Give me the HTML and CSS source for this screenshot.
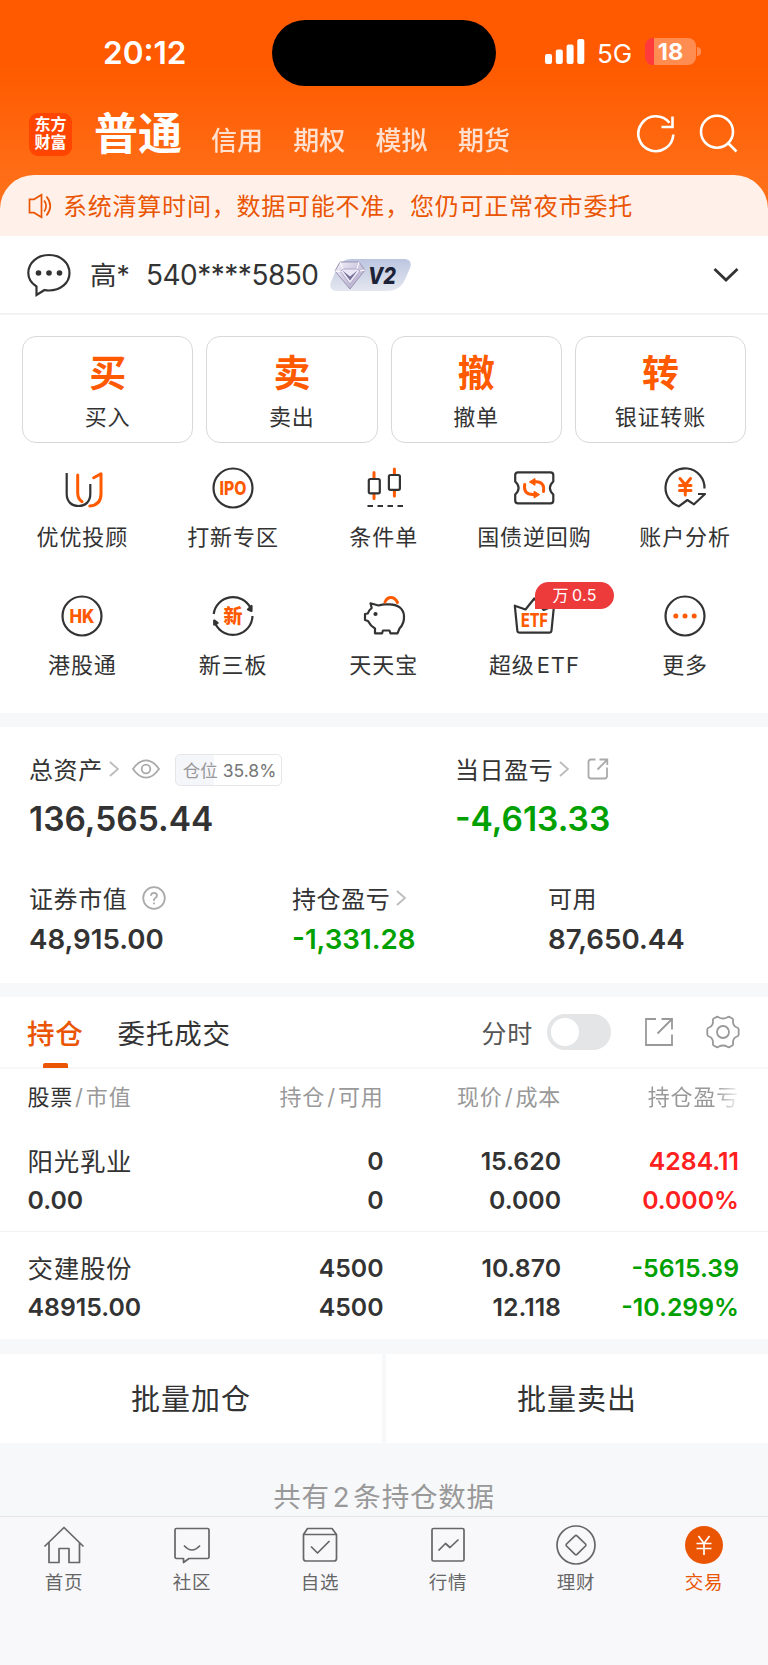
FILE: index.html
```html
<!DOCTYPE html>
<html lang="zh-CN">

<head>
    <meta charset="UTF-8">
    <meta name="viewport" content="width=device-width, initial-scale=1">
    <title>交易</title>
    <link rel="stylesheet" href="styles.css">
</head>

<body>
    <header class="top">
        <div class="status">
            <span class="time">20:12</span>
            <div class="island"></div>
            <div class="signal">
                <svg width="40" height="26" viewBox="0 0 40 26" fill="#fff">
                    <rect x="0" y="15" width="7" height="10" rx="2"/>
                    <rect x="10.8" y="10.5" width="7" height="14.500" rx="2"/>
                    <rect x="21.600" y="5.500" width="7" height="19.500" rx="2"/>
                    <rect x="32.300" y="0" width="7" height="25" rx="2"/>
                </svg>
                <span class="net">5G</span>
                <div class="battery">18</div>
                <i class="cap"></i>
            </div>
        </div>
        <nav class="account-tabs">
            <div class="logo">东方<br>财富</div>
            <span class="current">普通</span>
            <span class="tab">信用</span>
            <span class="tab">期权</span>
            <span class="tab">模拟</span>
            <span class="tab">期货</span>
            <div class="tools">
                <svg width="40" height="40" viewBox="0 0 40 40" fill="none" stroke="#fff" stroke-width="2.600">
                    <path d="M37.300 20.500A17.500 17.500 0 1 1 33.500 8.800"/>
                    <path d="M36.500 2.500V13H25.500"/>
                </svg>
                <svg width="40" height="40" viewBox="0 0 40 40" fill="none" stroke="#fff" stroke-width="2.600">
                    <circle cx="18" cy="17.700" r="16"/>
                    <path d="M29 29L37.500 37.500"/>
                </svg>
            </div>
        </nav>
        <div class="notice">
            <svg width="26" height="26" viewBox="0 0 26 26" fill="none" stroke="#ea5504" stroke-width="1.700">
                <path d="M1.500 6.300H6L13.500 1.800V24.200L6 19.700H1.500Z"/>
                <path d="M16.200 7.500Q20 13 16.200 18.500M18.500 3.500Q26 13 18.500 22.500"/>
            </svg>
            <span>系统清算时间，数据可能不准，您仍可正常夜市委托</span>
        </div>
    </header>

    <div class="account">
        <svg width="44" height="44" viewBox="0 0 44 44" fill="none" stroke="#333" stroke-width="2.200">
            <path d="M9.500 33.500C4 30 1.300 25.500 1.300 20C1.300 9.500 10.500 2 22 2S42.500 9.500 42.500 20S33 37.500 22 37.500C20.500 37.500 19 37.400 17.500 37L9.500 42Z"/>
            <g fill="#333" stroke="none">
                <circle cx="11.500" cy="20" r="2.800"/>
                <circle cx="22" cy="20" r="2.800"/>
                <circle cx="32.500" cy="20" r="2.800"/>
            </g>
        </svg>
        <span class="name">高*</span>
        <span class="number">540****5850</span>
        <svg class="level" width="82" height="34" viewBox="0 0 82 34">
            <defs>
                <linearGradient id="lv" x1="0" y1="0" x2="0" y2="1">
                    <stop offset="0" stop-color="#bcc6e0"/>
                    <stop offset="1" stop-color="#e4e7f0"/>
                </linearGradient>
                <linearGradient id="gem" x1="0" y1="0" x2="1" y2="1">
                    <stop offset="0" stop-color="#f4f1fb"/>
                    <stop offset="1" stop-color="#a99fc4"/>
                </linearGradient>
            </defs>
            <path d="M22 1H74C80 1 82 5 80 10L77 17C73 28 67 33 57 33H7C1 33-1 29 1 24L6 12C9 5 14 1 22 1Z" fill="url(#lv)"/>
            <path d="M10 4H29L35 12L20 31L5 13Z" fill="url(#gem)" stroke="#9a93b3" stroke-width="1"/>
            <path d="M13 11H27L30 13L20 26L10.500 13.500Z" fill="#ece9f6" stroke="#a39bbf" stroke-width=".8"/>
            <path d="M12.500 12.500L20 18.500L27.500 12.500L20 22.500Z" fill="#77709a"/>
            <path d="M10 4L13 11M29 4L27 11M5 13L10.500 13.500M35 12L30 13" fill="none" stroke="#fff" stroke-width="1"/>
            <text x="38" y="25.500" class="level-text" textLength="28" lengthAdjust="spacingAndGlyphs">V2</text>
        </svg>
        <svg class="more" width="26" height="16" viewBox="0 0 26 16" fill="none" stroke="#333" stroke-width="2.800">
            <path d="M1.500 2L13 13L24.500 2"/>
        </svg>
    </div>

    <section class="trade">
        <div class="cards">
            <div class="card"><b>买</b><span>买入</span></div>
            <div class="card"><b>卖</b><span>卖出</span></div>
            <div class="card"><b>撤</b><span>撤单</span></div>
            <div class="card"><b>转</b><span>银证转账</span></div>
        </div>
        <div class="menu">
            <div class="item">
                <svg viewBox="0 0 44 44" class="icon">
                    <path d="M6.700 7V28C6.700 35 11 40 18.500 40S30.300 35 30.300 28V18"/>
                    <path class="o" d="M17.700 9V27Q17.700 33 22 35.600M33.700 11.800L41 7.800V28Q41 39 29.800 40"/>
                </svg>
                <span>优优投顾</span>
            </div>
            <div class="item">
                <svg viewBox="0 0 44 44" class="icon">
                    <circle cx="22" cy="22" r="19.500"/>
                    <text x="22" y="28.600" textLength="27" lengthAdjust="spacingAndGlyphs">IPO</text>
                </svg>
                <span>打新专区</span>
            </div>
            <div class="item">
                <svg viewBox="0 0 44 44" class="icon">
                    <path class="o" d="M12 6.500V12M12 28V32.500M32.400 3V8M32.400 25V30"/>
                    <rect x="6.800" y="13" width="11" height="14.300" rx="1.500"/>
                    <rect x="26.900" y="9" width="11" height="14.800" rx="1.500"/>
                    <path d="M5.500 40H42" stroke-dasharray="5.500 4.500"/>
                </svg>
                <span>条件单</span>
            </div>
            <div class="item">
                <svg viewBox="0 0 44 44" class="icon">
                    <path d="M6 6.300H38.500Q41.300 6.300 41.300 9V15.500Q34.500 22 41.300 28.500V34.500Q41.300 37.300 38.500 37.300H6Q3.200 37.300 3.200 34.500V28.500Q10 22 3.200 15.500V9Q3.200 6.300 6 6.300Z"/>
                    <path class="o" d="M12.700 18.500Q11 28.500 21 28.500M23 15.800H24Q33 16 31.500 25.500"/>
                    <path class="tip" d="M23 12.500V19.300L17.300 15.900ZM22 25.200V32L27.600 28.600Z"/>
                </svg>
                <span>国债逆回购</span>
            </div>
            <div class="item">
                <svg viewBox="0 0 44 44" class="icon">
                    <path d="M41.500 22.500A19.500 19.500 0 1 0 15.800 40.300L24.400 34L31 38.300L42 28H35"/>
                    <path class="o" d="M17 12.500L22.300 19L27.500 12.500M22.300 19V29M16.500 19.500H28M16.500 24.500H28"/>
                </svg>
                <span>账户分析</span>
            </div>
            <div class="item">
                <svg viewBox="0 0 44 44" class="icon">
                    <circle cx="22" cy="22" r="19.500"/>
                    <text x="22" y="28.600" textLength="25" lengthAdjust="spacingAndGlyphs">HK</text>
                </svg>
                <span>港股通</span>
            </div>
            <div class="item">
                <svg viewBox="0 0 44 44" class="icon">
                    <path d="M2.700 20A19.500 19.500 0 0 1 39.500 14M41.500 22A19.500 19.500 0 0 1 4.500 30"/>
                    <path d="M37 15.500L40.500 12V17ZM3.200 30.500V26.500L6.500 29Z" fill="#333"/>
                    <text x="22" y="29" class="cn">新</text>
                </svg>
                <span>新三板</span>
            </div>
            <div class="item">
                <svg viewBox="0 0 44 44" class="icon">
                    <path d="M13 34.500V39.300H20L21 36.500H27.500L28.500 39.300H35.500L37.500 34.500C41 31 42.300 27 42 22C41.500 14 35 10.500 28 10.300H22Q19 10.500 16.500 11.500L8.500 9.300L9.700 14Q6.500 16.500 5.800 19.500L3 20V26L6 27Q8.500 32 13 34.500Z"/>
                    <path class="o" d="M23 8Q25 3.500 29 3.500T35.500 8.500"/>
                    <circle cx="13.500" cy="20" r="2.100" fill="#333" stroke="none"/>
                </svg>
                <span>天天宝</span>
            </div>
            <div class="item">
                <svg viewBox="0 0 44 44" class="icon">
                    <path d="M2.800 11.700L13.500 15.500L22.300 4.500L31.700 16L42 11.700L39.500 36.500Q39.300 38.700 37 38.700H8Q5.500 38.700 5.300 36.500Z"/>
                    <text x="22.500" y="32.600" textLength="27" lengthAdjust="spacingAndGlyphs">ETF</text>
                </svg>
                <span>超级<em>ETF</em></span>
                <div class="badge">万 0.5</div>
            </div>
            <div class="item">
                <svg viewBox="0 0 44 44" class="icon">
                    <circle cx="22" cy="22" r="19.500"/>
                    <g fill="#ff5a00" stroke="none">
                        <circle cx="12.800" cy="22" r="2.500"/>
                        <circle cx="22" cy="22" r="2.500"/>
                        <circle cx="31.200" cy="22" r="2.500"/>
                    </g>
                </svg>
                <span>更多</span>
            </div>
        </div>
    </section>

    <section class="assets">
        <div class="row main">
            <div class="cell">
                <div class="label">总资产
                    <svg class="arrow" width="10" height="16" viewBox="0 0 10 16"><path d="M1 1L9 8L1 15"/></svg>
                    <svg class="eye" width="28" height="20" viewBox="0 0 28 20">
                        <path d="M1 10Q7 1.300 14 1.300T27 10Q21 18.700 14 18.700T1 10Z"/>
                        <circle cx="14" cy="10" r="4.300"/>
                    </svg>
                    <div class="position"><span>仓位</span> 35.8%</div>
                </div>
                <div class="value">136,565.44</div>
            </div>
            <div class="cell">
                <div class="label">当日盈亏
                    <svg class="arrow" width="10" height="16" viewBox="0 0 10 16"><path d="M1 1L9 8L1 15"/></svg>
                    <svg class="share" width="22" height="22" viewBox="0 0 22 22">
                        <path d="M8.500 1.500H4Q1.500 1.500 1.500 4V18Q1.500 20.500 4 20.500H17.500Q20 20.500 20 18V9.500M10.500 11.500L20 2M12.500 1.500H20.300V7"/>
                    </svg>
                </div>
                <div class="value green">-4,613.33</div>
            </div>
        </div>
        <div class="row sub">
            <div class="cell">
                <div class="label">证券市值
                    <svg class="help" width="24" height="24" viewBox="0 0 24 24">
                        <circle cx="12" cy="12" r="10.800"/>
                        <path d="M9 9.800Q9 6.800 12 6.800T15 9.600Q15 11 13.300 12T12 15"/>
                        <path d="M12 16.500V18.300"/>
                    </svg>
                </div>
                <div class="value">48,915.00</div>
            </div>
            <div class="cell">
                <div class="label">持仓盈亏
                    <svg class="arrow" width="10" height="16" viewBox="0 0 10 16"><path d="M1 1L9 8L1 15"/></svg>
                </div>
                <div class="value green">-1,331.28</div>
            </div>
            <div class="cell">
                <div class="label">可用</div>
                <div class="value">87,650.44</div>
            </div>
        </div>
    </section>

    <section class="holdings">
        <div class="tabs">
            <span class="active">持仓</span>
            <span>委托成交</span>
            <div class="right">
                <span>分时</span>
                <div class="switch"></div>
                <svg class="out" width="28" height="28" viewBox="0 0 28 28">
                    <path d="M11 1H1V27H27V16.500M12.500 15.500L26.500 1.500M16.500 1H27V11.500"/>
                </svg>
                <svg class="gear" width="34" height="34" viewBox="0 0 34 34">
                    <path d="M10 2.200Q11.200 1.200 12.500 2.200Q17 4.800 21.500 2.200Q22.800 1.200 24 2.200L26.300 3.600Q27.500 4.400 27 6Q26.800 11 31 12.500Q32.700 13 32.700 14.500V19.500Q32.700 21 31 21.500Q26.800 23 27 28Q27.500 29.600 26.300 30.400L24 31.800Q22.800 32.800 21.500 31.800Q17 29.200 12.500 31.800Q11.200 32.800 10 31.800L7.700 30.400Q6.500 29.600 7 28Q7.200 23 3 21.500Q1.300 21 1.300 19.500V14.500Q1.300 13 3 12.500Q7.200 11 7 6Q6.500 4.400 7.700 3.600Z"/>
                    <circle cx="17" cy="17" r="6"/>
                </svg>
            </div>
        </div>
        <div class="line head">
            <div><em>股票</em><i>/</i>市值</div>
            <div>持仓<i>/</i>可用</div>
            <div>现价<i>/</i>成本</div>
            <div class="fade">持仓盈亏</div>
        </div>
        <div class="line stock">
            <div><span class="stock-name">阳光乳业</span>0.00</div>
            <div>0<br>0</div>
            <div>15.620<br>0.000</div>
            <div class="red">4284.11<br>0.000%</div>
        </div>
        <div class="line stock">
            <div><span class="stock-name">交建股份</span>48915.00</div>
            <div>4500<br>4500</div>
            <div>10.870<br>12.118</div>
            <div class="green">-5615.39<br>-10.299%</div>
        </div>
    </section>

    <div class="batch">
        <div>批量加仓</div>
        <div>批量卖出</div>
    </div>
    <p class="count">共有<span>2</span>条持仓数据</p>

    <footer class="tabbar">
        <div>
            <svg width="42" height="40" viewBox="0 0 42 40">
                <path d="M1.500 21.500L21 2.500L40.500 21.500M6 17.500V37.500H16V23.500H26V37.500H36.500V17.500"/>
            </svg>
            <span>首页</span>
        </div>
        <div>
            <svg width="42" height="40" viewBox="0 0 42 40">
                <path d="M5.500 3.500H36.500Q38 3.500 38 5V32Q38 33.500 36.500 33.500H18L12.500 37.500V33.500H5.500Q4 33.500 4 32V5Q4 3.500 5.500 3.500Z"/>
                <path d="M13 20.500Q21 29.500 29 20.500"/>
            </svg>
            <span>社区</span>
        </div>
        <div>
            <svg width="42" height="40" viewBox="0 0 42 40">
                <path d="M4.500 9.500L8.500 3.500H33L37.500 9.500V33.500Q37.500 36 35 36H7Q4.500 36 4.500 33.500ZM4.500 9.500H37.500M12 21.500L18.500 28L30.500 16"/>
            </svg>
            <span>自选</span>
        </div>
        <div>
            <svg width="42" height="40" viewBox="0 0 42 40">
                <rect x="5" y="3.500" width="32" height="32.500" rx="1.500"/>
                <path d="M11.500 25.500L18.500 18.500L23 22.500L31.500 14.500"/>
            </svg>
            <span>行情</span>
        </div>
        <div>
            <svg width="42" height="40" viewBox="0 0 42 40">
                <circle cx="21" cy="20" r="19"/>
                <path d="M20 10.800Q21 10 22 10.800L30.500 19Q31.300 20 30.500 21L22 29.400Q21 30.200 20 29.400L11.500 21Q10.700 20 11.500 19Z"/>
            </svg>
            <span>理财</span>
        </div>
        <div class="on">
            <svg width="42" height="40" viewBox="0 0 42 40">
                <circle cx="21" cy="20" r="19" fill="#ea5504" stroke="none"/>
                <path stroke="#fff" d="M15.500 11L21 18.500L26.500 11M21 18.500V30M13.500 18.500H28.500M13.500 23.500H28.500"/>
            </svg>
            <span>交易</span>
        </div>
    </footer>
</body>

</html>
```
FILE: styles.css
```css
* {
    box-sizing: border-box;
}

body {
    margin: 0;
    width: 768px;
    height: 1665px;
    overflow: hidden;
    background: #f7f8fa;
    color: #333;
    font-family: Inter, "Noto Sans CJK SC", sans-serif;
}

svg {
    display: block;
    flex: none;
}

em,
i {
    font-style: normal;
}

/* header */
.top {
    background: linear-gradient(#ff5a00 65px, #ff7019 190px);
    height: 236px;
}

.status {
    display: grid;
    grid-template-columns: 272px 224px 1fr;
    height: 106px;
    padding-top: 20px;
    color: #fff;
}

.time {
    font-size: 31.500px;
    font-weight: 600;
    line-height: 66px;
    padding-left: 103px;
}

.island {
    height: 66px;
    border-radius: 33px;
    background: #000;
}

.signal {
    display: flex;
    align-items: center;
    height: 63px;
    padding-left: 49px;
}

.net {
    font-size: 26px;
    margin-left: 12px;
    width: 48px;
    padding-top: 3px;
}

.battery {
    width: 51px;
    height: 27px;
    border-radius: 8px;
    background: linear-gradient(90deg, #ff3b3b 9px, #ff8c50 9px);
    font-size: 23.5px;
    font-weight: 700;
    line-height: 27px;
    text-align: center;
}

.cap {
    width: 4px;
    height: 9px;
    margin-left: 1px;
    border-radius: 0 5px 5px 0;
    background: #ff8c50;
}

.account-tabs {
    display: flex;
    height: 69px;
    padding: 0 29px;
    color: #fff;
}

.logo {
    width: 43px;
    height: 43px;
    margin-top: 7px;
    border-radius: 9px;
    background: #ff4500;
    font-size: 16px;
    font-weight: 700;
    line-height: 18px;
    text-align: center;
    padding-top: 2px;
}

.current {
    font-size: 44px;
    font-weight: 700;
    line-height: 57px;
    margin: 0 27px 0 22px;
    width: 90px;
    white-space: nowrap;
}

.tab {
    width: 82.3px;
    font-size: 26px;
    font-weight: 500;
    line-height: 70px;
    opacity: .8;
}

.tools {
    display: flex;
    gap: 23px;
    margin-left: auto;
    padding-top: 8px;
}

.notice {
    display: flex;
    align-items: center;
    height: 61px;
    padding: 0 0 0 28px;
    gap: 9px;
    border-radius: 34px 34px 0 0;
    background: #fff1ea;
    color: #ea5504;
    font-size: 24px;
    letter-spacing: .78px;
}

.notice span {
    padding-bottom: 3px;
}

.account {
    display: flex;
    align-items: center;
    height: 79px;
    padding: 0 29px 0 27px;
    background: #fff;
    border-bottom: 2px solid #f2f2f2;
    font-size: 28px;
}

.account .name {
    margin-left: 19px;
    padding-bottom: 2px;
    width: 56px;
    font-size: 26.500px;
}

.account .number {
    letter-spacing: -.5px;
    padding-top: 1px;
}

.account .level {
    margin-left: 12px;
}

.level-text {
    font-size: 23px;
    font-weight: 800;
    font-style: italic;
    fill: #1c2238;
}

.more {
    margin-left: auto;
}

/* trade buttons and menu */
.trade {
    height: 398px;
    padding-top: 21px;
    background: #fff;
}

.cards {
    display: grid;
    grid-template-columns: repeat(4, 1fr);
    gap: 13px;
    padding: 0 22px;
}

.card {
    height: 107px;
    border: 1.500px solid #d8d8d8;
    border-radius: 14px;
    text-align: center;
}

.card b {
    display: block;
    margin-top: 12px;
    color: #ff5a00;
    font-size: 37px;
    line-height: 50px;
}

.card span {
    display: block;
    font-size: 22px;
    line-height: 36px;
    letter-spacing: .8px;
}

.menu {
    display: grid;
    grid-template-columns: repeat(5, 150.700px);
    grid-auto-rows: 128.500px;
    padding: 22.500px 7px 0;
}

.item {
    position: relative;
    display: flex;
    flex-direction: column;
    align-items: center;
    font-size: 22px;
    line-height: 36px;
    letter-spacing: .9px;
}

.item em {
    margin-left: 2px;
}

.icon {
    width: 44px;
    height: 44px;
    margin-bottom: 9px;
    fill: none;
    stroke: #333;
    stroke-width: 2.200;
    stroke-linejoin: round;
    letter-spacing: 0;
}

.icon .o {
    stroke: #ff5a00;
    stroke-width: 3;
    stroke-linecap: round;
}

.icon .tip {
    fill: #ff5a00;
    stroke: #ff5a00;
    stroke-width: 1;
}

.icon text {
    fill: #ff5a00;
    stroke: none;
    font-size: 18.500px;
    font-weight: 800;
    text-anchor: middle;
}

.icon .cn {
    font-size: 19px;
}

.badge {
    position: absolute;
    left: 76px;
    top: -12px;
    width: 79px;
    height: 27px;
    border-radius: 14px 14px 14px 0;
    background: #ed3b3b;
    color: #fff;
    font-size: 16px;
    line-height: 27px;
    letter-spacing: .3px;
    word-spacing: -1.500px;
    text-align: center;
}

/* assets */
.assets {
    height: 256px;
    margin-top: 14px;
    padding: 22px 29px 0;
    background: #fff;
}

.row {
    display: grid;
    grid-template-columns: 426px 1fr;
}

.row.sub {
    grid-template-columns: 263px 256px 1fr;
    margin-top: 27px;
}

.label {
    display: flex;
    align-items: center;
    height: 38px;
    font-size: 24px;
    letter-spacing: .6px;
}

.label svg {
    margin-top: 2px;
    fill: none;
    stroke: #aaa;
    stroke-width: 1.800;
}

.label .arrow {
    margin-left: 6px;
    stroke: #bbb;
}

.label .eye {
    margin-left: 13px;
}

.label .share {
    margin-left: 18px;
}

.label .help {
    margin-left: 15px;
}

.position {
    margin: 4px 0 0 15px;
    width: 107px;
    height: 32px;
    border: 1px solid #e6e6e9;
    border-radius: 5px;
    background: linear-gradient(90deg, #f5f6f9 36%, #fff 36%);
    color: #777;
    font-size: 17.500px;
    line-height: 31px;
    letter-spacing: 0;
    padding-left: 7px;
    white-space: nowrap;
}

.position span {
    color: #999;
}

.value {
    font-size: 33.500px;
    font-weight: 600;
    line-height: 65px;
}

.main {
    height: 102px;
}

.sub .value {
    font-size: 27.700px;
    line-height: 47px;
}

.green {
    color: #00a000;
}

.red {
    color: #ff2020;
}

/* holdings */
.holdings {
    height: 342px;
    margin-top: 14px;
    background: #fff;
}

.tabs {
    display: flex;
    align-items: center;
    height: 72px;
    padding: 0 28px 0 27px;
    border-bottom: 2px solid #f7f7f7;
    font-size: 27.500px;
    letter-spacing: .8px;
}

.tabs .active {
    position: relative;
    margin-right: 34px;
    color: #ea5504;
    font-weight: 500;
}

.tabs .active::after {
    content: "";
    position: absolute;
    left: 16px;
    bottom: -16px;
    width: 25px;
    height: 5px;
    border-radius: 2px 2px 0 0;
    background: #ea5504;
}

.tabs .right {
    display: flex;
    align-items: center;
    margin-left: auto;
    color: #555;
    font-size: 25px;
}

.switch {
    width: 64px;
    height: 36px;
    margin: 0 34px 0 14px;
    padding: 4px;
    border-radius: 18px;
    background: #e4e5e7;
}

.switch::before {
    content: "";
    display: block;
    width: 28px;
    height: 28px;
    border-radius: 50%;
    background: #fff;
}

.tabs svg {
    fill: none;
    stroke: #999;
    stroke-width: 1.800;
}

.tabs .gear {
    margin-left: 33px;
    stroke-linejoin: round;
}

.line {
    display: grid;
    grid-template-columns: 171px 185px 177.500px 178px;
    padding-left: 27.500px;
    text-align: right;
}

.line > :first-child {
    text-align: left;
    white-space: nowrap;
}

.head {
    height: 56px;
    color: #999;
    font-size: 22px;
    line-height: 57px;
    letter-spacing: .8px;
}

.head em {
    color: #333;
}

.head i {
    margin: 0 2px;
}

.head .fade {
    -webkit-mask-image: linear-gradient(90deg, #000 155px, transparent 180px);
    mask-image: linear-gradient(90deg, #000 155px, transparent 180px);
}

.stock {
    height: 107px;
    padding-top: 17px;
    font-size: 24.800px;
    font-weight: 600;
    line-height: 39px;
    border-bottom: 1px solid #f2f2f4;
}

.stock:last-child {
    border: 0;
}

.stock-name {
    display: block;
    height: 39px;
    font-size: 25.500px;
    font-weight: 400;
    letter-spacing: .7px;
}

.batch {
    display: grid;
    grid-template-columns: 382px 382px;
    gap: 4px;
    margin-top: 15px;
}

.batch div {
    height: 89px;
    background: #fff;
    font-size: 29px;
    line-height: 91px;
    letter-spacing: 1px;
    text-align: center;
}

.count {
    height: 73px;
    margin: 0;
    padding-top: 29px;
    color: #999;
    font-size: 27.500px;
    line-height: 50px;
    letter-spacing: .8px;
    text-align: center;
}

.count span {
    margin: 0 3px;
}

.tabbar {
    display: grid;
    grid-template-columns: repeat(6, 1fr);
    height: 149px;
    padding-top: 8px;
    border-top: 1px solid #e6e6e8;
    background: #f8f8fb;
}

.tabbar div {
    display: flex;
    flex-direction: column;
    align-items: center;
    color: #666;
    font-size: 18.500px;
    line-height: 34px;
    letter-spacing: .7px;
}

.tabbar svg {
    fill: none;
    stroke: #666;
    stroke-width: 1.700;
    stroke-linejoin: round;
}

.tabbar .on {
    color: #ea5504;
}
```
